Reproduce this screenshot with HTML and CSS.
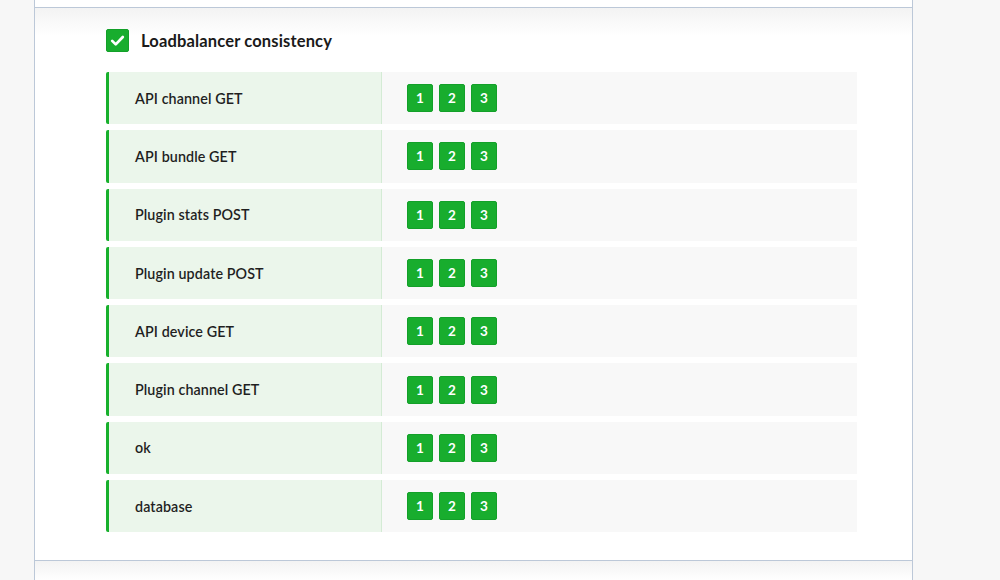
FILE: index.html
```html
<!DOCTYPE html>
<html>
<head>
<meta charset="utf-8">
<link rel="stylesheet" href="styles.css">
</head>
<body>
<div class="card">
  <div class="top"></div>
  <div class="section">
    <div class="header">
      <span class="check"><svg viewBox="0 0 24 24" width="17" height="17"><path d="M4.5 12.5 L9.5 17.5 L19.5 7" fill="none" stroke="#fff" stroke-width="3.8" stroke-linecap="round" stroke-linejoin="round"/></svg></span>
      <h2 class="title">Loadbalancer consistency</h2>
    </div>
    <div class="rows">
      <div class="row"><div class="name">API channel GET</div><div class="badges"><span class="badge">1</span><span class="badge">2</span><span class="badge">3</span></div></div>
      <div class="row"><div class="name">API bundle GET</div><div class="badges"><span class="badge">1</span><span class="badge">2</span><span class="badge">3</span></div></div>
      <div class="row"><div class="name">Plugin stats POST</div><div class="badges"><span class="badge">1</span><span class="badge">2</span><span class="badge">3</span></div></div>
      <div class="row"><div class="name">Plugin update POST</div><div class="badges"><span class="badge">1</span><span class="badge">2</span><span class="badge">3</span></div></div>
      <div class="row"><div class="name">API device GET</div><div class="badges"><span class="badge">1</span><span class="badge">2</span><span class="badge">3</span></div></div>
      <div class="row"><div class="name">Plugin channel GET</div><div class="badges"><span class="badge">1</span><span class="badge">2</span><span class="badge">3</span></div></div>
      <div class="row"><div class="name">ok</div><div class="badges"><span class="badge">1</span><span class="badge">2</span><span class="badge">3</span></div></div>
      <div class="row"><div class="name">database</div><div class="badges"><span class="badge">1</span><span class="badge">2</span><span class="badge">3</span></div></div>
    </div>
  </div>
  <div class="bottom"></div>
</div>
</body>
</html>
```
FILE: styles.css
```css
html, body {
  margin: 0;
  padding: 0;
  background: #f7f7f7;
  font-family: Lato, "Liberation Sans", sans-serif;
  color: #1f1f1f;
}
.card {
  margin-left: 34px;
  width: 877px;
  height: 580px;
  background: #fff;
  border-left: 1px solid #bcc8d8;
  border-right: 1px solid #bcc8d8;
}
.top {
  height: 7px;
  border-bottom: 1px solid #bcc8d8;
}
.section {
  padding: 21px 0 28px 71px;
  background: linear-gradient(#f3f3f3, #fff 28px);
}
.header {
  display: flex;
  align-items: center;
  gap: 12px;
  height: 23px;
  margin-bottom: 20px;
}
.check {
  width: 21px;
  height: 21px;
  background: #18ad2e;
  border: 1px solid #13a029;
  border-radius: 2px;
  display: flex;
  align-items: center;
  justify-content: center;
}
.title {
  margin: 0;
  font-size: 16.5px;
  letter-spacing: 0.15px;
  font-weight: 700;
  color: #1a1a1a;
}
.rows {
  display: flex;
  flex-direction: column;
  gap: 6px;
  width: 751px;
}
.row {
  display: flex;
  height: 52.3px;
}
.name {
  width: 246px;
  border-left: 3px solid #17b02c;
  border-right: 1px solid #d4ebd5;
  border-radius: 2px 0 0 2px;
  background: #ebf6eb;
  padding-left: 26px;
  display: flex;
  align-items: center;
  font-size: 14.3px;
  letter-spacing: 0.1px;
  font-weight: 600;
  color: #1f1f1f;
}
.badges {
  flex: 1;
  background: #f8f8f8;
  padding-left: 25px;
  display: flex;
  align-items: center;
  gap: 6px;
}
.badge {
  height: 26px;
  min-width: 22px;
  padding: 0 1px;
  box-sizing: content-box;
  background: #18ad2e;
  border: 1px solid #13a029;
  border-radius: 2px;
  color: #fff;
  font-size: 13.5px;
  font-weight: 700;
  display: flex;
  align-items: center;
  justify-content: center;
}
.bottom {
  border-top: 1px solid #bcc8d8;
  height: 20px;
  background: linear-gradient(#f3f3f3, #fff);
}
```
